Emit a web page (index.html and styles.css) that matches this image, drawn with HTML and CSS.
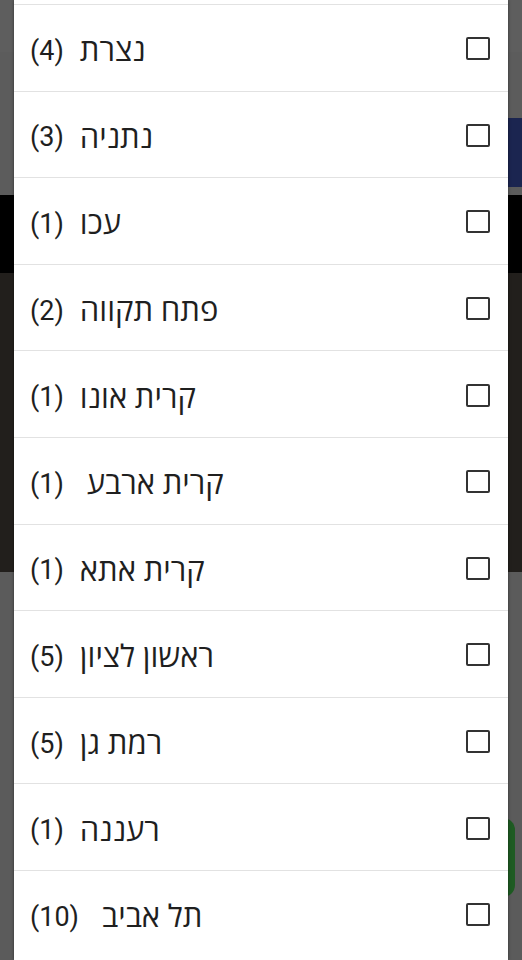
FILE: index.html
```html
<!DOCTYPE html>
<html lang="he">
<head>
    <meta charset="UTF-8">
    <meta name="viewport" content="width=device-width, initial-scale=1.0">
    <title>סינון לפי עיר</title>
    <link rel="stylesheet" href="styles.css">
</head>
<body>
    <div class="page">
        <div class="page-top"></div>
        <div class="page-bar"></div>
        <div class="page-hero"></div>
        <div class="page-rest"></div>
        <div class="page-blue"></div>
        <div class="page-fab"></div>
    </div>

    <div class="dialog">
        <ul class="city-list">
            <li class="city-row"><span class="count">(4)</span><span class="name">נצרת</span><span class="box"></span></li>
            <li class="city-row"><span class="count">(3)</span><span class="name">נתניה</span><span class="box"></span></li>
            <li class="city-row"><span class="count">(1)</span><span class="name">עכו</span><span class="box"></span></li>
            <li class="city-row"><span class="count">(2)</span><span class="name">פתח תקווה</span><span class="box"></span></li>
            <li class="city-row"><span class="count">(1)</span><span class="name">קרית אונו</span><span class="box"></span></li>
            <li class="city-row"><span class="count">(1)</span><span class="name wide">קרית ארבע</span><span class="box"></span></li>
            <li class="city-row"><span class="count">(1)</span><span class="name">קרית אתא</span><span class="box"></span></li>
            <li class="city-row"><span class="count">(5)</span><span class="name">ראשון לציון</span><span class="box"></span></li>
            <li class="city-row"><span class="count">(5)</span><span class="name">רמת גן</span><span class="box"></span></li>
            <li class="city-row"><span class="count">(1)</span><span class="name">רעננה</span><span class="box"></span></li>
            <li class="city-row"><span class="count">(10)</span><span class="name wide">תל אביב</span><span class="box"></span></li>
        </ul>
    </div>
</body>
</html>
```

FILE: styles.css
```css
body {
    margin: 0;
    font-family: Roboto, "Open Sans", "Liberation Sans", sans-serif;
    background-color: #5b5b5b;
    overflow: hidden;
}
.page {
    position: relative;
    height: 960px;
}
.page-top {
    height: 195px;
    background: #5c5c5c;
    border-top: 52px solid #5e5e5e;
    box-sizing: border-box;
}
.page-bar {
    height: 78px;
    background: #000;
}
.page-hero {
    height: 299px;
    background: #221f1c;
}
.page-rest {
    height: 388px;
    background: #5b5b5b;
}
.page-blue {
    position: absolute;
    top: 118px;
    right: 0;
    width: 40px;
    height: 69px;
    background: #1b2550;
}
.page-fab {
    position: absolute;
    top: 818px;
    right: 7px;
    width: 40px;
    height: 79px;
    border-radius: 12px;
    background: #1e5b22;
}
.dialog {
    position: absolute;
    top: 0;
    left: 14px;
    width: 494px;
    height: 960px;
    background: #fff;
    box-shadow: 0 0 3px rgba(0, 0, 0, 0.5);
    overflow: hidden;
}
.city-list {
    list-style: none;
    margin: 0;
    padding: 4px 0 0;
}
.city-row {
    display: flex;
    align-items: center;
    height: 86.6px;
    box-sizing: border-box;
    border-top: 1.5px solid #e2e2e2;
    padding: 6px 18px 0 16px;
    color: #1f1f1f;
    font-size: 27px;
}
.count {
    direction: ltr;
}
.name {
    direction: rtl;
    margin-left: 16px;
    font-size: 31px;
    line-height: 1;
}
.name.wide {
    margin-left: 23px;
}
.box {
    margin-left: auto;
    margin-top: -4px;
    width: 24px;
    height: 23px;
    box-sizing: border-box;
    border: 2.5px solid #333;
    border-radius: 2px;
}
```
